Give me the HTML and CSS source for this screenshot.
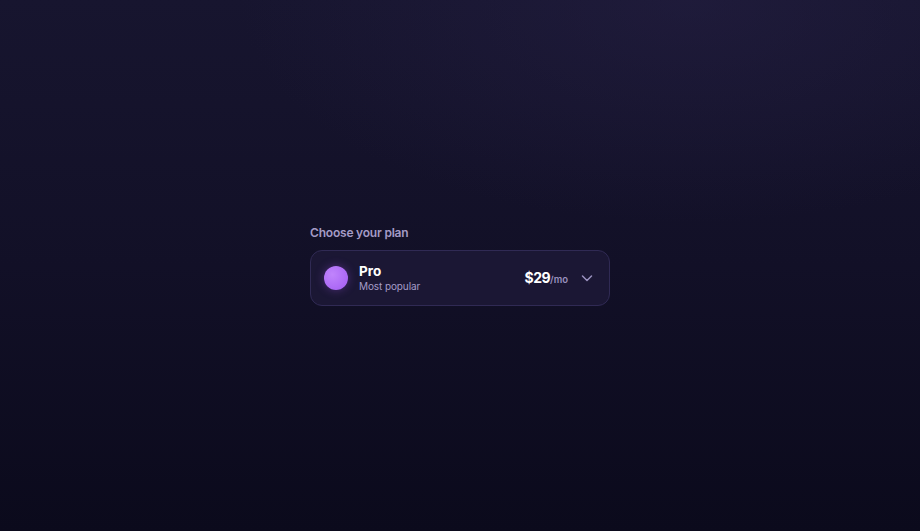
FILE: index.html
```html
<!DOCTYPE html>
<html lang="en">
<head>
    <meta charset="UTF-8">
    <title>Choose your plan</title>
    <link rel="stylesheet" href="styles.css">
</head>
<body>
    <div class="picker">
        <div class="picker-label">Choose your plan</div>
        <div class="plan-select">
            <div class="plan-dot"></div>
            <div class="plan-info">
                <div class="plan-name">Pro</div>
                <div class="plan-note">Most popular</div>
            </div>
            <div class="plan-price">$29<span>/mo</span></div>
            <svg class="plan-chevron" width="12" height="12" viewBox="0 0 12 12" fill="none">
                <path d="M1.5 4l4.5 4.5 4.5-4.5" stroke="currentColor" stroke-width="1.5" stroke-linecap="round" stroke-linejoin="round"/>
            </svg>
        </div>
    </div>
</body>
</html>
```

FILE: styles.css
```css
html, body {
    height: 100%;
}

body {
    margin: 0;
    font-family: Inter, "Liberation Sans", sans-serif;
    background:
        radial-gradient(ellipse 70% 60% at 75% 0%, rgba(40, 34, 72, 0.45), transparent 70%),
        linear-gradient(180deg, #17152f 0%, #121027 50%, #0b0a1c 100%);
    display: flex;
    align-items: center;
    justify-content: center;
}

.picker {
    width: 300px;
    margin-top: -1px;
}

.picker-label {
    color: #a49bc6;
    font-size: 12px;
    font-weight: 600;
    letter-spacing: -0.2px;
    margin-bottom: 9px;
    line-height: 16px;
}

.plan-select {
    display: flex;
    align-items: center;
    height: 54px;
    padding: 0 16px 0 13px;
    background: #1b1734;
    border: 1px solid #302a54;
    border-radius: 12px;
}

.plan-dot {
    width: 24px;
    height: 24px;
    border-radius: 50%;
    background: radial-gradient(circle at 35% 35%, #c084fc, #a25cf2);
    box-shadow: 0 0 10px rgba(168, 85, 247, 0.35);
    margin-right: 11px;
}

.plan-info {
    flex: 1;
}

.plan-name {
    color: #fff;
    font-size: 13.5px;
    font-weight: 700;
    line-height: 16px;
}

.plan-note {
    color: #a59cc8;
    font-size: 10px;
    letter-spacing: -0.1px;
    line-height: 14px;
}

.plan-price {
    color: #fff;
    font-size: 14px;
    font-weight: 700;
    letter-spacing: -0.5px;
}

.plan-price span {
    color: #9a91bf;
    font-size: 9.5px;
    font-weight: 600;
    letter-spacing: 0;
}

.plan-chevron {
    color: #9a91bf;
    margin-left: 13px;
}
```
